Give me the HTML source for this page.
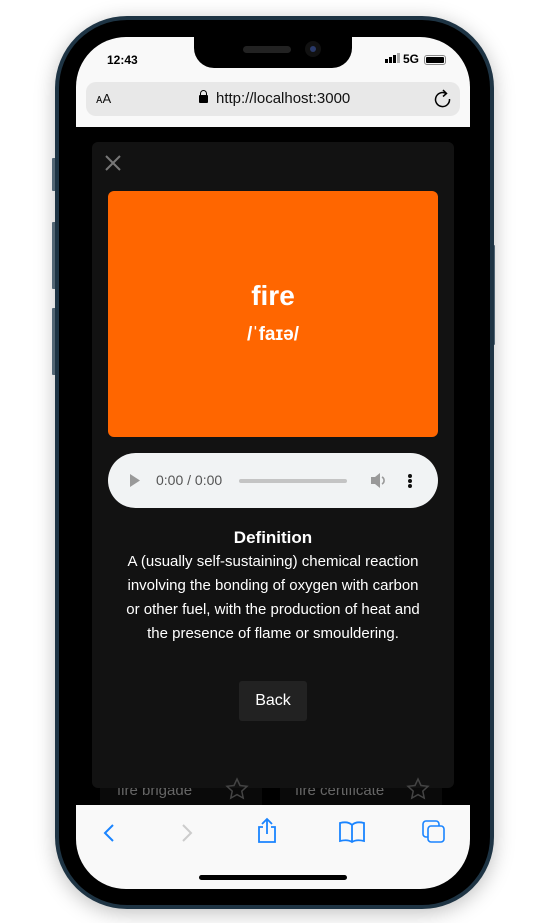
<!DOCTYPE html>
<html><head><meta charset="utf-8"><style>
*{margin:0;padding:0;box-sizing:border-box}
body{width:547px;height:923px;background:#fff;position:relative;overflow:hidden;font-family:"Liberation Sans",Arial,sans-serif}
.btn{position:absolute;background:#5d7383;border-radius:1px}
.frame{position:absolute;left:55px;top:16px;width:439px;height:893px;border-radius:72px;background:#1e3444;box-shadow:0 4px 20px rgba(0,0,0,.25)}
.inner{position:absolute;left:59px;top:20px;width:431px;height:885px;border-radius:68px;background:#000}
.screen{position:absolute;left:76px;top:37px;width:394px;height:852px;border-radius:50px;overflow:hidden;background:#000}
.notch{position:absolute;left:118px;top:0;width:158px;height:31px;background:#000;border-radius:0 0 20px 20px}
.top{position:absolute;left:0;top:0;width:394px;height:90px;background:#f9f9f9}
.addr{position:absolute;left:10px;top:45px;width:374px;height:34px;background:#e8e8e8;border-radius:10px;font-size:15px;color:#111}
.modal{position:absolute;left:16px;top:105px;width:362px;height:646px;background:#121212;border-radius:6px}
.card{position:absolute;left:16px;top:49px;width:330px;height:246px;background:#ff6600;border-radius:6px;color:#fff;text-align:center}
.audio{position:absolute;left:16px;top:311px;width:330px;height:55px;background:#f1f3f4;border-radius:28px}
.def{position:absolute;left:6px;top:384px;width:350px;text-align:center;color:#fff;font-size:15px;line-height:24px;white-space:nowrap}
.back{position:absolute;left:147px;top:539px;width:68px;height:40px;background:#222;border-radius:3px;color:#fff;font-size:16px;text-align:center;line-height:40px}
.bot{position:absolute;left:0;top:768px;width:394px;height:84px;background:#f9f9f9}
</style></head><body>
<div class="btn" style="left:52px;top:158px;width:4px;height:33px"></div>
<div class="btn" style="left:52px;top:222px;width:4px;height:67px"></div>
<div class="btn" style="left:52px;top:308px;width:4px;height:67px"></div>
<div class="btn" style="left:491px;top:245px;width:4px;height:100px"></div>
<div class="frame"></div>
<div class="inner"></div>
<div class="screen">
 <div class="top"></div>
 <div class="notch"><div style="position:absolute;left:49px;top:9px;width:48px;height:7px;background:#222;border-radius:4px"></div><div style="position:absolute;left:111px;top:4px;width:16px;height:16px;background:#111;border-radius:50%"><div style="margin:5px;width:6px;height:6px;border-radius:50%;background:#2a3a6a"></div></div></div>
 <div style="position:absolute;left:31px;top:16px;font-size:12px;font-weight:bold;color:#000">12:43</div>
 <div style="position:absolute;left:309px;top:22px;width:3px;height:4px;background:#000"></div>
 <div style="position:absolute;left:313px;top:20px;width:3px;height:6px;background:#000"></div>
 <div style="position:absolute;left:317px;top:18px;width:3px;height:8px;background:#000"></div>
 <div style="position:absolute;left:321px;top:16px;width:3px;height:10px;background:#aaa"></div>
 <div style="position:absolute;left:327px;top:15px;font-size:12px;font-weight:bold">5G</div>
 <div style="position:absolute;left:348px;top:18px;width:22px;height:10px;border:1px solid #888;border-radius:3px;padding:1px"><div style="width:100%;height:100%;background:#000;border-radius:1px"></div></div>
 <div class="addr">
  <span style="position:absolute;left:10px;top:9px;font-size:13px">ᴀA</span>
  <div style="position:absolute;left:113px;top:13px;width:9px;height:8px;background:#000;border-radius:1px"></div>
  <div style="position:absolute;left:114px;top:8px;width:7px;height:8px;border:1.5px solid #000;border-radius:4px 4px 0 0"></div>
  <span style="position:absolute;left:130px;top:8px">http://localhost:3000</span>
  <svg style="position:absolute;left:348px;top:7px" width="18" height="20" viewBox="0 0 18 20"><path d="M12 4.5A7 7 0 1 0 15.5 10" fill="none" stroke="#000" stroke-width="1.5"/><path d="M9 1l3.5 3.5L9 7.5" fill="none" stroke="#000" stroke-width="1.5"/></svg>
 </div>
 <div style="position:absolute;left:24px;top:735px;width:162px;height:40px;background:#0a0a0a"></div>
 <div style="position:absolute;left:204px;top:735px;width:162px;height:40px;background:#0a0a0a"></div>
 <div style="position:absolute;left:41px;top:745px;color:#666;font-size:15px">fire brigade</div>
 <div style="position:absolute;left:219px;top:745px;color:#666;font-size:15px">fire certificate</div>
 <div class="modal">
  <svg style="position:absolute;left:13px;top:13px" width="16" height="16"><path d="M1 1L15 15M15 1L1 15" stroke="#777" stroke-width="2"/></svg>
  <div class="card"><div style="padding-top:89px;font-size:28px;font-weight:bold">fire</div><div style="margin-top:12px;font-size:19px;font-weight:bold">/ˈfaɪə/</div></div>
  <div class="audio">
   <svg style="position:absolute;left:22px;top:21px" width="10" height="13"><path d="M0 0L10 6.5L0 13Z" fill="#999"/></svg>
   <span style="position:absolute;left:48px;top:19px;font-size:14px;color:#555">0:00 / 0:00</span>
   <div style="position:absolute;left:131px;top:26px;width:108px;height:4px;background:#c4c4c4;border-radius:2px"></div>
   <svg style="position:absolute;left:262px;top:19px" width="18" height="17"><path d="M1 5h4l5-4v15l-5-4H1Z" fill="#999"/><path d="M12 5a4 4 0 0 1 0 7" fill="none" stroke="#999" stroke-width="1.6"/></svg>
   <div style="position:absolute;left:300px;top:21px;width:4px;height:4px;background:#111;border-radius:50%;box-shadow:0 5px 0 #111,0 10px 0 #111"></div>
  </div>
  <div class="def"><div style="font-weight:bold;font-size:17px">Definition</div>A (usually self-sustaining) chemical reaction<br>involving the bonding of oxygen with carbon<br>or other fuel, with the production of heat and<br>the presence of flame or smouldering.</div>
  <div class="back">Back</div>
 </div>
 <svg style="position:absolute;left:149px;top:740px" width="24" height="24"><path d="M12 2l3 6.5 7 .8-5.2 4.8 1.4 7L12 17.6 5.8 21.1l1.4-7L2 9.3l7-.8Z" fill="none" stroke="#444" stroke-width="1.5"/></svg>
 <svg style="position:absolute;left:330px;top:740px" width="24" height="24"><path d="M12 2l3 6.5 7 .8-5.2 4.8 1.4 7L12 17.6 5.8 21.1l1.4-7L2 9.3l7-.8Z" fill="none" stroke="#444" stroke-width="1.5"/></svg>
 <div class="bot">
  <svg style="position:absolute;left:26px;top:18px" width="14" height="20"><path d="M11 2L3 10l8 8" fill="none" stroke="#1a84ff" stroke-width="2"/></svg>
  <svg style="position:absolute;left:104px;top:18px" width="14" height="20"><path d="M3 2l8 8-8 8" fill="none" stroke="#ccc" stroke-width="2"/></svg>
  <svg style="position:absolute;left:180px;top:12px" width="22" height="28"><path d="M7 10H3v15h16V10h-4M11 17V2M6 7l5-5 5 5" fill="none" stroke="#1a84ff" stroke-width="1.8"/></svg>
  <svg style="position:absolute;left:263px;top:16px" width="26" height="22"><path d="M13 4C10 1 5 1 1 2v18c4-1 9-1 12 1c3-2 8-2 12-1V2c-4-1-9-1-12 2v17" fill="none" stroke="#1a84ff" stroke-width="1.8"/></svg>
  <svg style="position:absolute;left:346px;top:15px" width="24" height="24"><rect x="1" y="1" width="16" height="16" rx="3" fill="none" stroke="#1a84ff" stroke-width="1.6"/><rect x="6" y="6" width="16" height="16" rx="3" fill="#f9f9f9" stroke="#1a84ff" stroke-width="1.6"/></svg>
  <div style="position:absolute;left:123px;top:70px;width:148px;height:5px;background:#000;border-radius:3px"></div>
 </div>
</div>
</body></html>
